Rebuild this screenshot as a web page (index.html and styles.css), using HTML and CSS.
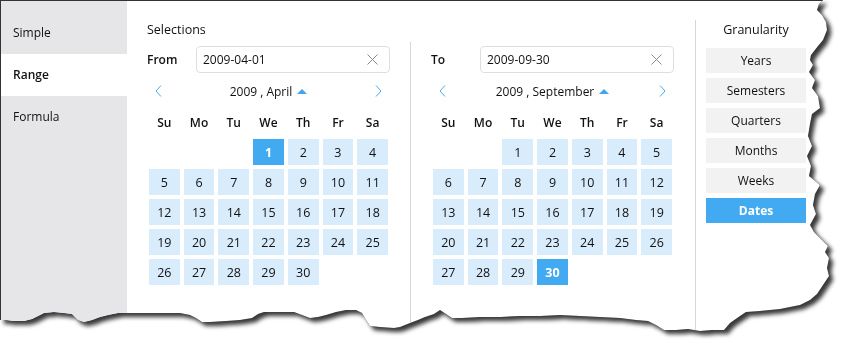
FILE: index.html
```html
<!DOCTYPE html>
<html lang="en">
<head>
    <meta charset="UTF-8">
    <title>Date filter</title>
    <link rel="stylesheet" href="styles.css">
</head>
<body>
    <div class="frame">
        <div class="window">
            <nav class="modes">
                <div class="mode">Simple</div>
                <div class="mode active">Range</div>
                <div class="mode">Formula</div>
            </nav>

            <main class="selections">
                <h2 class="section-title">Selections</h2>
                <div class="ranges">
                    <section class="range">
                        <div class="field-row">
                            <label>From</label>
                            <div class="date-input">
                                <span>2009-04-01</span>
                                <svg class="clear" width="11" height="11" viewBox="0 0 11 11"><path d="M0.5 0.5L10.5 10.5M10.5 0.5L0.5 10.5"/></svg>
                            </div>
                        </div>
                        <div class="cal-nav">
                            <svg class="chevron" width="7" height="12" viewBox="0 0 7 12"><path d="M6 0.5L1 6L6 11.5"/></svg>
                            <div class="cal-title">2009 , April <span class="caret"></span></div>
                            <svg class="chevron" width="7" height="12" viewBox="0 0 7 12"><path d="M1 0.5L6 6L1 11.5"/></svg>
                        </div>
                        <div class="cal-grid">
                            <div class="wd">Su</div><div class="wd">Mo</div><div class="wd">Tu</div><div class="wd">We</div><div class="wd">Th</div><div class="wd">Fr</div><div class="wd">Sa</div>
                            <div></div><div></div><div></div>
                            <div class="day selected">1</div><div class="day">2</div><div class="day">3</div><div class="day">4</div>
                            <div class="day">5</div><div class="day">6</div><div class="day">7</div><div class="day">8</div><div class="day">9</div><div class="day">10</div><div class="day">11</div>
                            <div class="day">12</div><div class="day">13</div><div class="day">14</div><div class="day">15</div><div class="day">16</div><div class="day">17</div><div class="day">18</div>
                            <div class="day">19</div><div class="day">20</div><div class="day">21</div><div class="day">22</div><div class="day">23</div><div class="day">24</div><div class="day">25</div>
                            <div class="day">26</div><div class="day">27</div><div class="day">28</div><div class="day">29</div><div class="day">30</div>
                        </div>
                    </section>

                    <section class="range">
                        <div class="field-row">
                            <label>To</label>
                            <div class="date-input">
                                <span>2009-09-30</span>
                                <svg class="clear" width="11" height="11" viewBox="0 0 11 11"><path d="M0.5 0.5L10.5 10.5M10.5 0.5L0.5 10.5"/></svg>
                            </div>
                        </div>
                        <div class="cal-nav">
                            <svg class="chevron" width="7" height="12" viewBox="0 0 7 12"><path d="M6 0.5L1 6L6 11.5"/></svg>
                            <div class="cal-title">2009 , September <span class="caret"></span></div>
                            <svg class="chevron" width="7" height="12" viewBox="0 0 7 12"><path d="M1 0.5L6 6L1 11.5"/></svg>
                        </div>
                        <div class="cal-grid">
                            <div class="wd">Su</div><div class="wd">Mo</div><div class="wd">Tu</div><div class="wd">We</div><div class="wd">Th</div><div class="wd">Fr</div><div class="wd">Sa</div>
                            <div></div><div></div>
                            <div class="day">1</div><div class="day">2</div><div class="day">3</div><div class="day">4</div><div class="day">5</div>
                            <div class="day">6</div><div class="day">7</div><div class="day">8</div><div class="day">9</div><div class="day">10</div><div class="day">11</div><div class="day">12</div>
                            <div class="day">13</div><div class="day">14</div><div class="day">15</div><div class="day">16</div><div class="day">17</div><div class="day">18</div><div class="day">19</div>
                            <div class="day">20</div><div class="day">21</div><div class="day">22</div><div class="day">23</div><div class="day">24</div><div class="day">25</div><div class="day">26</div>
                            <div class="day">27</div><div class="day">28</div><div class="day">29</div><div class="day selected">30</div>
                        </div>
                    </section>
                </div>
            </main>

            <aside class="granularity">
                <h2 class="section-title">Granularity</h2>
                <div class="gran-list">
                    <div class="gran">Years</div>
                    <div class="gran">Semesters</div>
                    <div class="gran">Quarters</div>
                    <div class="gran">Months</div>
                    <div class="gran">Weeks</div>
                    <div class="gran active">Dates</div>
                </div>
            </aside>
        </div>
    </div>
</body>
</html>
```

FILE: styles.css
```css
* {
    margin: 0;
    padding: 0;
    box-sizing: border-box;
}

body {
    font-family: "Open Sans", "Noto Sans", sans-serif;
    font-size: 12px;
    color: #111;
    background: #fff;
    width: 852px;
    height: 353px;
    overflow: hidden;
}

/* torn screenshot edge */
.frame {
    filter: drop-shadow(0 0 0.6px #111) drop-shadow(4px 4px 2px rgba(0, 0, 0, 0.78));
}

.window {
    display: flex;
    width: 852px;
    height: 353px;
    background: #fff;
    border-top: 1px solid #333;
    border-left: 1px solid #333;
    clip-path: polygon(0 0, 823px 0, 819px 4px, 817px 10px, 822px 15px, 826px 22px, 827px 30px, 823px 40px, 818px 46px, 811px 55px, 810px 60px, 813px 65px, 809px 72px, 815px 80px, 812px 88px, 818px 96px, 820px 108px, 812px 114px, 810px 124px, 808px 136px, 812px 146px, 807px 156px, 811px 166px, 809px 176px, 820px 185px, 815px 194px, 813px 205px, 816px 214px, 810px 225px, 814px 232px, 820px 238px, 828px 246px, 825px 252px, 829px 258px, 827px 268px, 829px 276px, 823px 285px, 817px 294px, 810px 300px, 800px 305px, 790px 307px, 780px 309px, 770px 310px, 760px 311px, 746px 312px, 740px 316px, 730px 323px, 724px 330px, 712px 330px, 700px 331px, 688px 329px, 676px 330px, 664px 330px, 656px 325px, 648px 321px, 636px 320px, 620px 318px, 600px 317px, 580px 316px, 560px 315px, 540px 316px, 520px 316px, 500px 317px, 480px 317px, 462px 318px, 452px 318px, 446px 314px, 440px 310px, 434px 314px, 425px 317px, 418px 320px, 410px 323px, 400px 327px, 394px 328px, 380px 327px, 370px 326px, 366px 320px, 362px 313px, 356px 310px, 346px 310px, 336px 312px, 326px 315px, 318px 317px, 310px 318px, 302px 315px, 294px 312px, 280px 312px, 264px 312px, 258px 314px, 252px 318px, 240px 320px, 226px 321px, 210px 322px, 202px 322px, 196px 318px, 190px 315px, 180px 313px, 160px 313px, 140px 313px, 118px 313px, 108px 315px, 100px 317px, 92px 320px, 84px 322px, 78px 320px, 72px 314px, 64px 313px, 54px 312px, 44px 313px, 38px 316px, 32px 319px, 24px 321px, 14px 321px, 6px 320px, 0 320px);
}

.modes {
    width: 126px;
    flex: none;
    background: #e6e6e8;
    padding-top: 11px;
}

.mode {
    height: 42px;
    line-height: 42px;
    padding-left: 12px;
    font-size: 12px;
}

.mode.active {
    background: #fff;
    font-weight: 600;
}

.section-title {
    font-size: 12.5px;
    font-weight: 400;
    line-height: 20px;
}

.selections {
    flex: none;
    padding: 19px 0 0 20px;
}

.ranges {
    display: flex;
    margin-top: 2px;
    height: 290px;
}

.range {
    width: 263px;
    padding-top: 4px;
    padding-right: 20px;
}

.range + .range {
    width: 285px;
    padding-left: 20px;
    padding-right: 21px;
    border-left: 1px solid #d6d6d6;
}

.field-row {
    display: flex;
    align-items: center;
}

.field-row label {
    width: 49px;
    font-weight: 600;
}

.date-input {
    width: 194px;
    height: 27px;
    border: 1px solid #dedede;
    border-radius: 4px;
    display: flex;
    align-items: center;
    justify-content: space-between;
    padding: 0 11px 0 6px;
}

.clear path {
    stroke: #8a8a8a;
    stroke-width: 1;
    fill: none;
}

.cal-nav {
    display: flex;
    align-items: center;
    justify-content: space-between;
    height: 22px;
    margin-top: 7px;
    padding: 0 8px;
}

.chevron path {
    stroke: #4aa8ee;
    stroke-width: 1;
    fill: none;
}

.cal-title {
    display: flex;
    align-items: center;
    gap: 5px;
}

.caret {
    width: 0;
    height: 0;
    border-left: 5px solid transparent;
    border-right: 5px solid transparent;
    border-bottom: 5px solid #42a5ef;
}

.cal-grid {
    display: grid;
    grid-template-columns: repeat(7, 1fr);
    grid-auto-rows: 26px;
    gap: 4px;
    margin-top: 7px;
    padding: 0 2px;
}

.wd {
    display: flex;
    align-items: center;
    justify-content: center;
    font-weight: 600;
}

.day {
    display: flex;
    align-items: center;
    justify-content: center;
    background: #d9ecfc;
    font-size: 12.5px;
}

.day.selected {
    background: #42aaf0;
    color: #fff;
    font-weight: 700;
}

.granularity {
    flex: none;
    margin-top: 19px;
    border-left: 1px solid #d6d6d6;
    padding: 0 10px;
    height: 310px;
}

.granularity .section-title {
    width: 100px;
    text-align: center;
}

.gran-list {
    display: flex;
    flex-direction: column;
    gap: 5px;
    margin-top: 8px;
}

.gran {
    width: 100px;
    height: 25px;
    line-height: 25px;
    text-align: center;
    background: #f2f2f2;
    font-size: 12px;
}

.gran.active {
    background: #42aaf0;
    color: #fff;
    font-weight: 700;
}
```
